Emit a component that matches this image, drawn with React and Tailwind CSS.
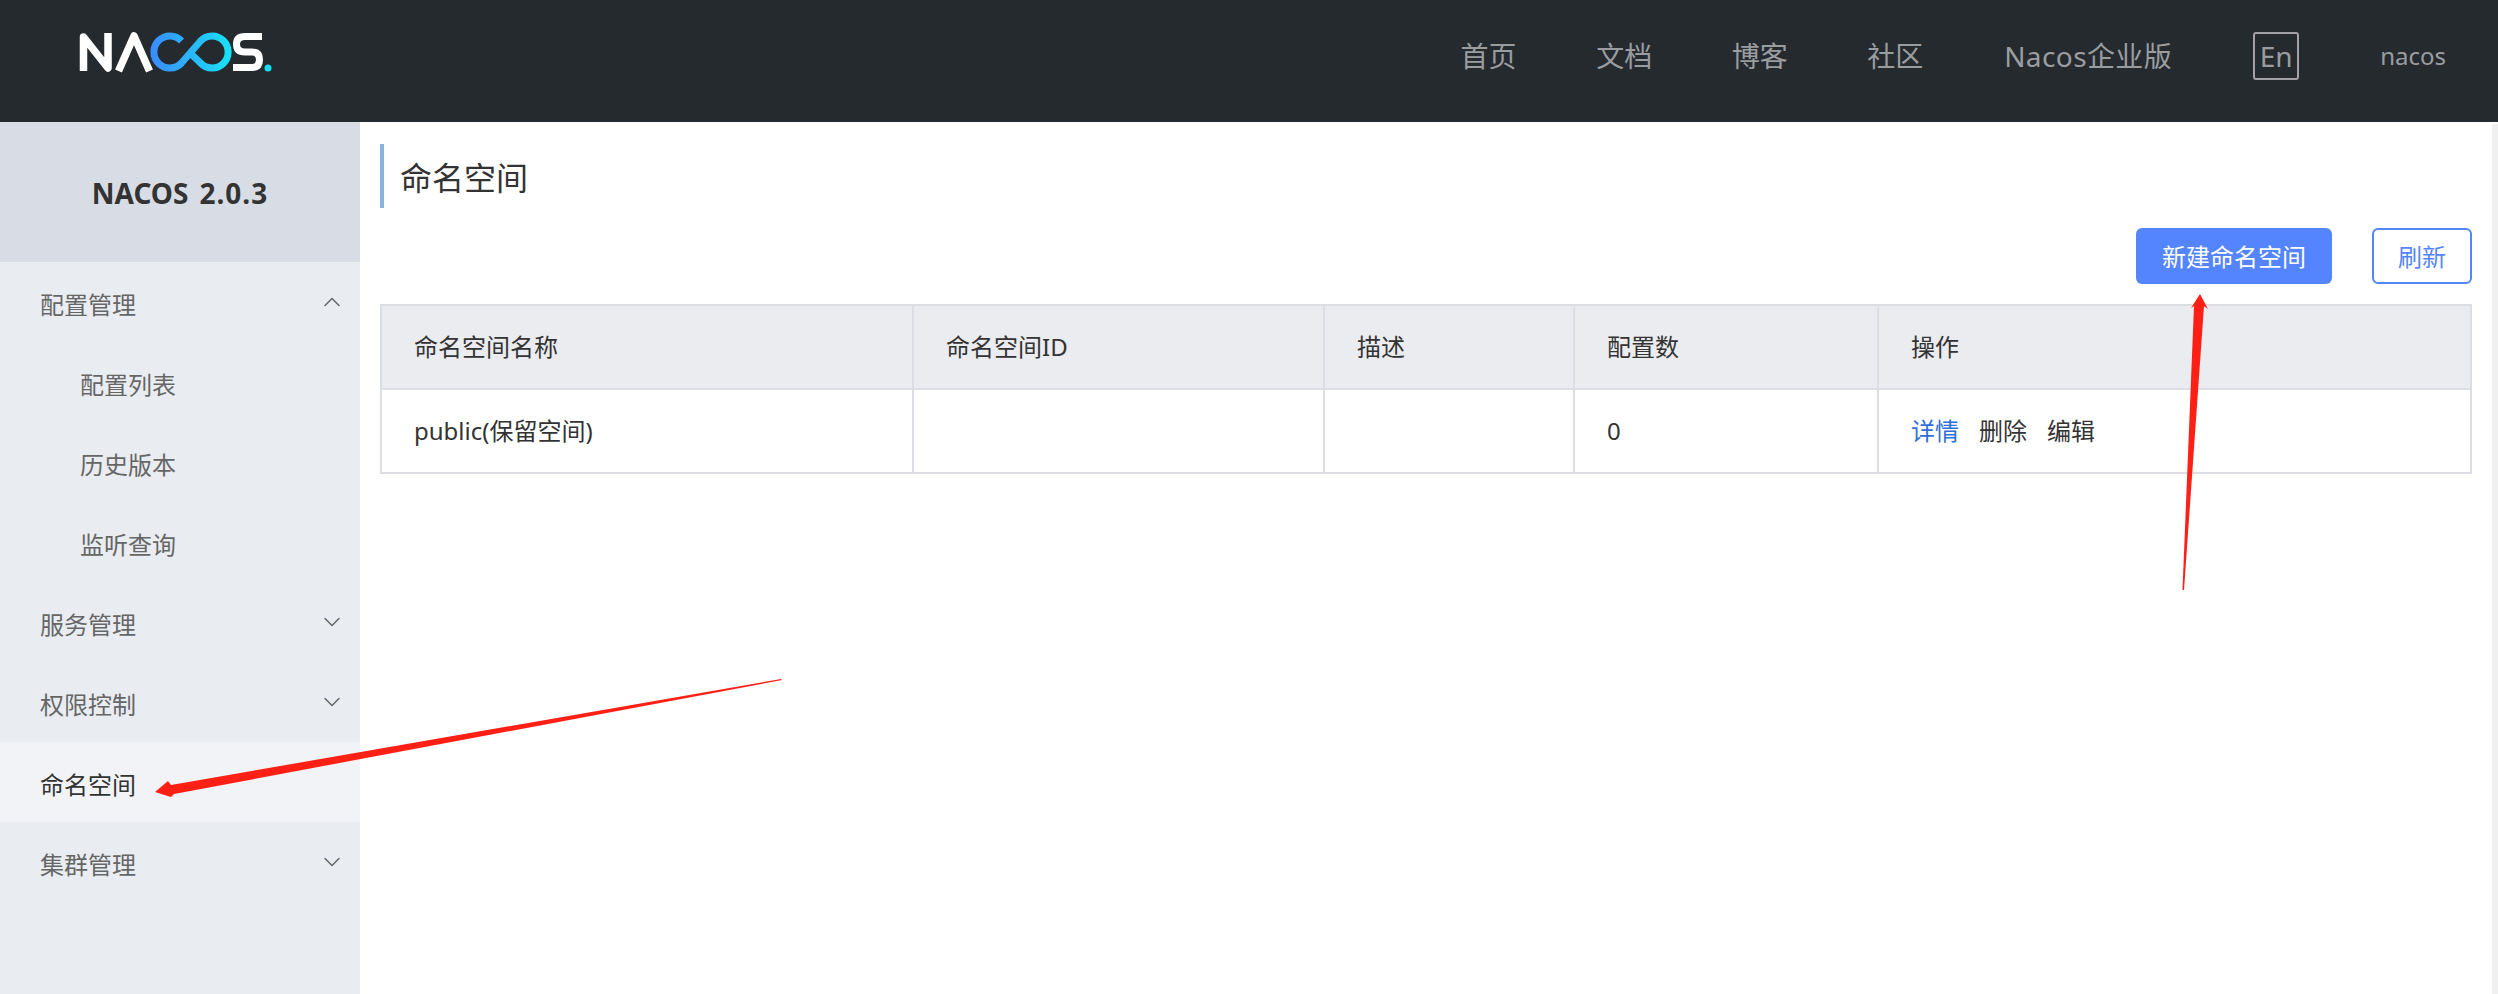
import { ChevronDown, ChevronUp } from "lucide-react";

const menu = [
  { label: "配置管理", chevron: "up" },
  { label: "配置列表", sub: true },
  { label: "历史版本", sub: true },
  { label: "监听查询", sub: true },
  { label: "服务管理", chevron: "down" },
  { label: "权限控制", chevron: "down" },
  { label: "命名空间", active: true },
  { label: "集群管理", chevron: "down" },
];

function Logo() {
  return (
    <svg className="self-start mt-7" width="200" height="50" viewBox="76 28 200 50" fill="none">
      <defs>
        <linearGradient id="loop" gradientUnits="userSpaceOnUse" x1="151" y1="52" x2="232" y2="52">
          <stop offset="0" stopColor="#3a8bff" />
          <stop offset="1" stopColor="#18e3f6" />
        </linearGradient>
      </defs>
      <path d="M83.5 71V37L108 68V33" stroke="#fff" strokeWidth="7.5" strokeLinejoin="round" />
      <path d="M118.5 71L134 36L149.5 71" stroke="#fff" strokeWidth="7.5" strokeLinejoin="round" />
      <path
        d="M181.5 41A16 16 0 1 0 181.5 63L200.5 41A16 16 0 1 1 200.5 63L189 52"
        stroke="url(#loop)"
        strokeWidth="7"
      />
      <path
        d="M262 36.5H245Q236.5 36.5 236.5 44.2Q236.5 52 245 52H252Q259.5 52 259.5 59.8Q259.5 67.5 252 67.5H233"
        stroke="#fff"
        strokeWidth="7"
      />
      <circle cx="268" cy="68" r="3.5" fill="#18dcf0" />
    </svg>
  );
}

function Arrows() {
  return (
    <svg className="absolute top-0 left-0 pointer-events-none" width="2498" height="994" fill="#ff2015">
      <polygon points="2200,294 2208,309 2204,306 2184,590 2182.5,590 2194,306 2191,308" />
      <polygon points="155,792 168,781 171,785 781,679 782,680 174,794 171,797" />
    </svg>
  );
}

function Sidebar() {
  return (
    <div className="w-[360px] shrink-0 bg-[#e9edf2]">
      <div className="h-[140px] pt-[2px] bg-[#d8dde5] flex items-center justify-center text-[28px] font-bold text-[#333] font-['Noto_Sans',sans-serif]">
        <span className="mr-[11px]">NACOS</span>
        <span className="tracking-[1px]">2.0.3</span>
      </div>
      {menu.map((item) => (
        <div
          key={item.label}
          className={`h-20 flex items-center justify-between text-2xl pr-[14px] ${
            item.sub ? "pl-20" : "pl-10"
          } ${item.active ? "bg-[#f2f3f7] text-[#333]" : "text-[#666]"}`}
        >
          <span className="pt-[3px]">{item.label}</span>
          {item.chevron === "up" && <ChevronUp size={28} strokeWidth={1.25} />}
          {item.chevron === "down" && <ChevronDown size={28} strokeWidth={1.25} />}
        </div>
      ))}
    </div>
  );
}

export default function App() {
  return (
    <div className="relative w-[2498px] h-[994px] overflow-hidden bg-white flex flex-col font-['Noto_Sans_CJK_SC','Noto_Sans',sans-serif]">
      <header className="h-[122px] shrink-0 bg-[#252a2f] flex items-center justify-between pr-[52px] pl-[76px] pb-[10px]">
        <Logo />
        <nav className="flex items-center gap-[81px] text-[28px] text-[#9a9da0] font-['Noto_Sans','Noto_Sans_CJK_SC',sans-serif]">
          <div className="flex items-center gap-[79.5px]">
            <span>首页</span>
            <span>文档</span>
            <span>博客</span>
            <span>社区</span>
          </div>
          <span className="tracking-[0.4px]">Nacos企业版</span>
          <span className="w-[46px] h-12 flex items-center justify-center border-2 border-[#a0a2a5] rounded-[3px]">En</span>
          <span className="text-2xl">nacos</span>
        </nav>
      </header>

      <div className="flex-1 flex min-h-0">
        <Sidebar />

        <main className="flex-1 pl-5 pr-5 pt-[22px]">
          <h1 className="h-16 border-l-4 border-[#8ab4dc] pl-4 flex items-center text-[32px] font-normal text-[#333]">
            命名空间
          </h1>

          <div className="mt-5 flex justify-end gap-10 text-2xl">
            <button className="w-[196px] h-14 rounded-[6px] bg-[#5584ff] text-white">新建命名空间</button>
            <button className="w-[100px] h-14 rounded-[6px] border-2 border-[#5584ff] text-[#5584ff]">刷新</button>
          </div>

          <table className="mt-5 w-[2092px] table-fixed border-collapse text-2xl text-[#333] text-left font-['Noto_Sans','Noto_Sans_CJK_SC',sans-serif]">
            <colgroup>
              <col className="w-[532px]" />
              <col className="w-[411px]" />
              <col className="w-[250px]" />
              <col className="w-[304px]" />
              <col />
            </colgroup>
            <thead>
              <tr className="h-[84px] bg-[#ebecf0]">
                <th className="border-2 border-[#dcdee3] pl-8 font-normal">命名空间名称</th>
                <th className="border-2 border-[#dcdee3] pl-8 font-normal">命名空间ID</th>
                <th className="border-2 border-[#dcdee3] pl-8 font-normal">描述</th>
                <th className="border-2 border-[#dcdee3] pl-8 font-normal">配置数</th>
                <th className="border-2 border-[#dcdee3] pl-8 font-normal">操作</th>
              </tr>
            </thead>
            <tbody>
              <tr className="h-[84px]">
                <td className="border-2 border-[#dcdee3] pl-8">public(保留空间)</td>
                <td className="border-2 border-[#dcdee3] pl-8"></td>
                <td className="border-2 border-[#dcdee3] pl-8"></td>
                <td className="border-2 border-[#dcdee3] pl-8">0</td>
                <td className="border-2 border-[#dcdee3] pl-8">
                  <span className="text-[#2f6fd6] mr-5">详情</span>
                  <span className="mr-5">删除</span>
                  <span>编辑</span>
                </td>
              </tr>
            </tbody>
          </table>
        </main>

        <div className="w-[6px] mt-[2px] bg-[#f0f0f0]"></div>
      </div>

      <Arrows />
    </div>
  );
}
